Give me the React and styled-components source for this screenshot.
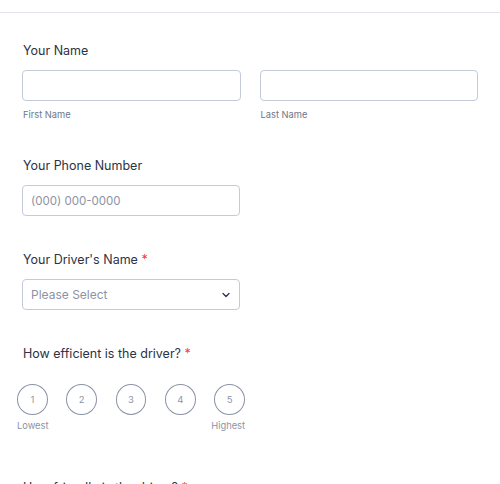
import React from "react";
import styled, { createGlobalStyle } from "styled-components";

const Global = createGlobalStyle`
  body {
    margin: 0;
    background: #fff;
    font-family: Inter, "Noto Sans", sans-serif;
    color: #2c3345;
  }
  * { box-sizing: border-box; }
`;

function App() {
  return (
    <>
      <Global />
      <Page>
        <TopBar />
        <Form>
          <Field $gap={28}>
            <Label>Your Name</Label>
            <Row>
              <Column>
                <Input />
                <SubLabel>First Name</SubLabel>
              </Column>
              <Column>
                <Input />
                <SubLabel>Last Name</SubLabel>
              </Column>
            </Row>
          </Field>

          <Field $gap={34}>
            <Label>Your Phone Number</Label>
            <Half>
              <Input placeholder="(000) 000-0000" />
            </Half>
          </Field>

          <Field $gap={34}>
            <Label>
              Your Driver's Name <Required>*</Required>
            </Label>
            <Half>
              <Select>
                <span>Please Select</span>
                <svg width="12" height="12" viewBox="0 0 24 24" fill="none" stroke="#2c3345" strokeWidth="2.6" strokeLinecap="round" strokeLinejoin="round">
                  <path d="M6 9l6 6 6-6" />
                </svg>
              </Select>
            </Half>
          </Field>

          <Field $gap={34}>
            <Label>
              How efficient is the driver? <Required>*</Required>
            </Label>
            <Rating>
              <Circles>
                {[1, 2, 3, 4, 5].map((n) => (
                  <Circle key={n}>{n}</Circle>
                ))}
              </Circles>
              <Ends>
                <span>Lowest</span>
                <span>Highest</span>
              </Ends>
            </Rating>
          </Field>

          <Field $gap={45}>
            <Label>
              How friendly is the driver? <Required>*</Required>
            </Label>
          </Field>
        </Form>
      </Page>
    </>
  );
}

const Page = styled.div`
  width: 500px;
  height: 484px;
  overflow: hidden;
`;

const TopBar = styled.div`
  height: 13px;
  border-bottom: 1px solid #e3e5ec;
`;

const Form = styled.div`
  padding: 0 22px;
  display: flex;
  flex-direction: column;
`;

const Field = styled.div`
  margin-top: ${(p) => p.$gap}px;
`;

const Label = styled.div`
  font-size: 12.5px;
  line-height: 20px;
  font-weight: 400;
  color: #2c3345;
  padding-left: 1px;
  margin-bottom: 9px;
`;

const Required = styled.span`
  color: #f23a3c;
`;

const Row = styled.div`
  display: grid;
  grid-template-columns: 1fr 1fr;
  gap: 19px;
`;

const Column = styled.div`
  display: flex;
  flex-direction: column;
`;

const Half = styled.div`
  width: 218px;
`;

const Input = styled.input`
  display: block;
  width: 100%;
  height: 31px;
  border: 1px solid #c3cad8;
  border-radius: 4px;
  padding: 0 8px;
  font-family: Inter, "Noto Sans", sans-serif;
  font-size: 11.5px;
  color: #2c3345;
  outline: none;
  &::placeholder {
    color: #8c93a6;
  }
`;

const SubLabel = styled.div`
  font-size: 9.3px;
  line-height: 14px;
  color: #6f7687;
  margin-top: 7px;
  padding-left: 1px;
`;

const Select = styled.div`
  height: 31px;
  border: 1px solid #c3cad8;
  border-radius: 4px;
  padding: 0 7px 0 8px;
  display: flex;
  align-items: center;
  justify-content: space-between;
  font-size: 12px;
  color: #8c93a6;
`;

const Rating = styled.div`
  margin-left: -5px;
  margin-top: 20px;
  width: 228px;
`;

const Circles = styled.div`
  display: flex;
  gap: 18.5px;
`;

const Circle = styled.div`
  width: 31px;
  height: 31px;
  border-radius: 50%;
  border: 1px solid #8c93a6;
  display: flex;
  align-items: center;
  justify-content: center;
  font-size: 9.5px;
  color: #8c93a6;
`;

const Ends = styled.div`
  display: flex;
  justify-content: space-between;
  font-size: 9.3px;
  line-height: 14px;
  color: #8c93a6;
  margin-top: 4px;
`;

export default App;
